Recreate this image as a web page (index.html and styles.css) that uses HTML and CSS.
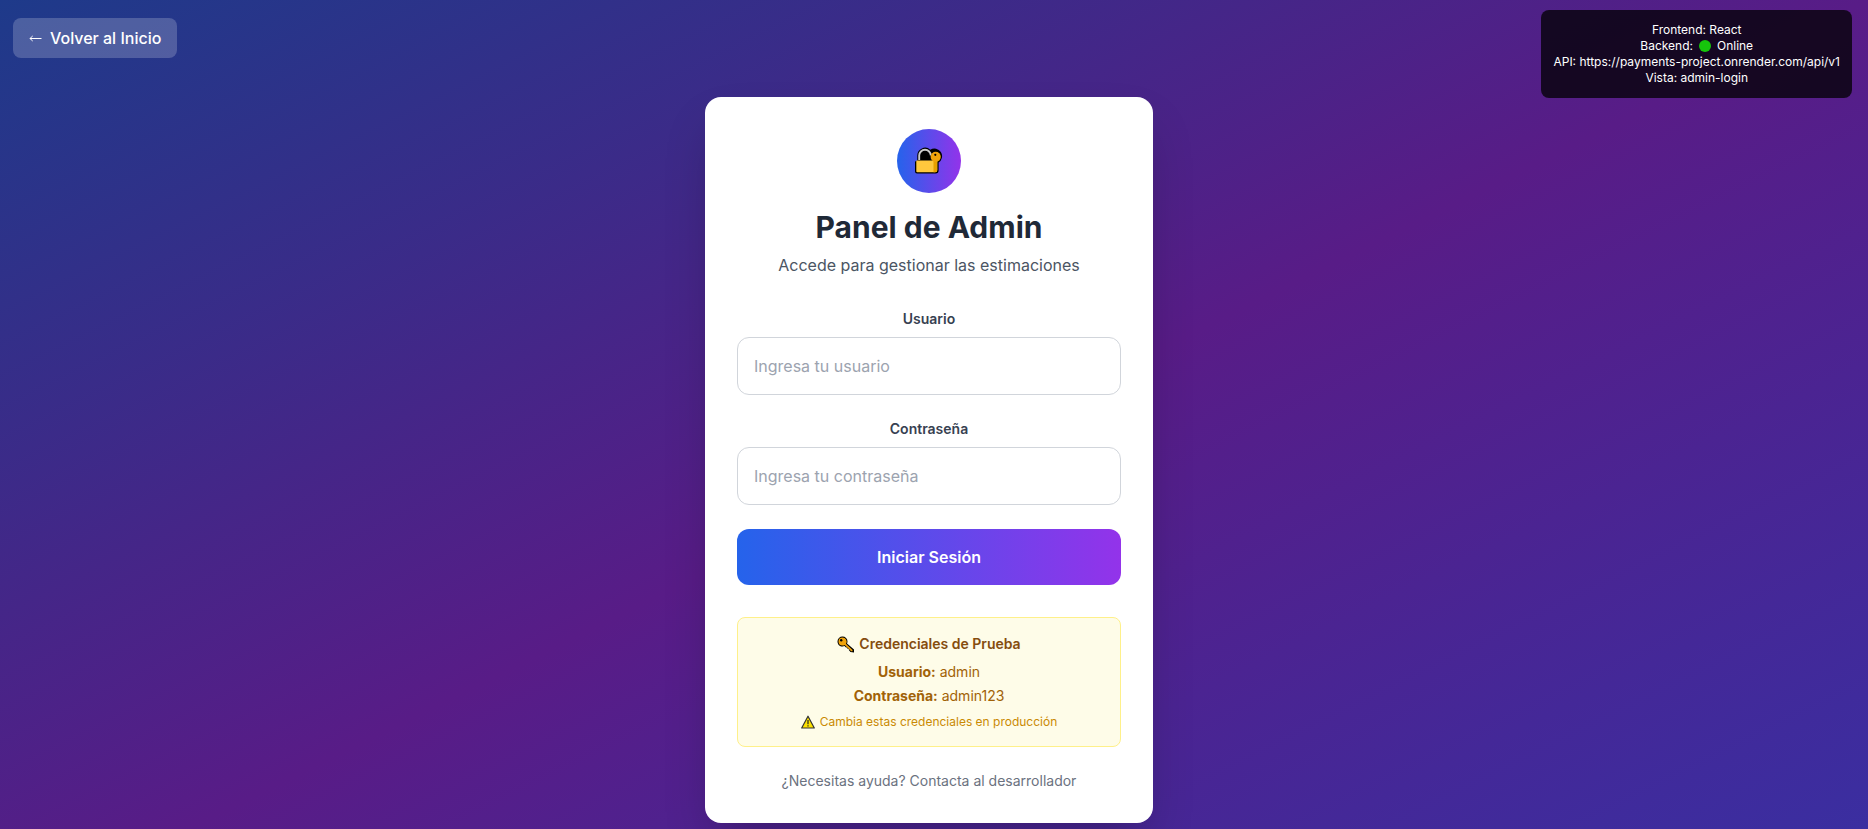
FILE: index.html
```html
<!DOCTYPE html>
<html lang="es">
<head>
  <meta charset="utf-8">
  <meta name="viewport" content="width=device-width, initial-scale=1">
  <title>Panel de Admin</title>
  <link rel="stylesheet" href="styles.css">
</head>
<body>
  <div class="page">
    <button class="back" type="button">
      <svg class="back-arrow" viewBox="0 0 13 12" aria-hidden="true"><path d="M.7 6.500h11.800M3.700 4L1 6.500 3.700 9" fill="none" stroke="currentColor"/></svg>
      Volver al Inicio
    </button>

    <main class="card">
      <div class="badge">
        <svg class="badge-icon" viewBox="0 0 28 28" aria-hidden="true">
          <path d="M2.3 14V8.500a7.800 7.800 0 0 1 13-5.800A6.200 6.200 0 1 1 23.600 15.500V23.500a3 3 0 0 1-3 3H2a2 2 0 0 1-2-2V15a1.500 1.500 0 0 1 2.300-1z" fill="#000"/>
          <path d="M4.200 13V8.600a5.800 5.800 0 0 1 11.600 0" fill="none" stroke="#ccc" stroke-width="1.900"/>
          <path d="M1.300 13.500h21v9.700a2 2 0 0 1-2 2h-18a1 1 0 0 1-1-1z" fill="#ffc83d"/>
          <path d="M18.500 13h3.700v10a2.200 2.200 0 0 1-2.200 2.200h-1.500z" fill="#e8a000"/>
          <circle cx="20.700" cy="9.800" r="5.100" fill="#f0a30a"/>
          <circle cx="20.300" cy="7.800" r="1.100" fill="#000"/>
        </svg>
      </div>
      <h1 class="title">Panel de Admin</h1>
      <p class="subtitle">Accede para gestionar las estimaciones</p>

      <form class="form">
        <div class="field">
          <label class="label" for="user">Usuario</label>
          <input class="input" id="user" type="text" placeholder="Ingresa tu usuario">
        </div>
        <div class="field">
          <label class="label" for="password">Contraseña</label>
          <input class="input" id="password" type="password" placeholder="Ingresa tu contraseña">
        </div>
        <button class="submit" type="submit">Iniciar Sesión</button>
      </form>

      <section class="notice">
        <h2 class="notice-title">
          <svg class="key-icon" viewBox="0 0 17 17" aria-hidden="true">
            <path d="M5.500.5a5 5 0 0 0-5 5c0 3 2.300 5 5 5 .8 0 1.400-.1 2-.4l1.500 1.400h1l.5 1.300 1.200.2.300 1.300 1.500 1.700 3.500.5v-3L10 7.500c.3-.6.500-1.300.500-2a5 5 0 0 0-5-5z" fill="#000"/>
            <path d="M5.500 1.500a4 4 0 0 0-4 4 4 4 0 0 0 4 4c.8 0 1.500-.2 2.200-.6l6.500 6.300h1.300v-1.300L8.900 7.700a4 4 0 0 0-3.400-6.200z" fill="#f0a30a"/>
            <circle cx="4.200" cy="4.200" r="1.200" fill="#000"/>
          </svg>
          Credenciales de Prueba
        </h2>
        <p class="notice-line"><strong>Usuario:</strong> admin</p>
        <p class="notice-line"><strong>Contraseña:</strong> admin123</p>
        <p class="notice-warning">
          <svg class="warning-icon" viewBox="0 0 14 14" aria-hidden="true">
            <path d="M7 1.200L13.300 13H.7z" fill="#fce100" stroke="#333" stroke-width="1.200" stroke-linejoin="round"/>
            <path d="M7 5v4.300M7 10.200v1.400" stroke="#222" stroke-width="1.200"/>
          </svg>
          Cambia estas credenciales en producción
        </p>
      </section>

      <p class="help">¿Necesitas ayuda? Contacta al desarrollador</p>
    </main>

    <aside class="status">
      <div>Frontend: React</div>
      <div class="status-row">Backend: <span class="dot"></span> Online</div>
      <div>API: https://payments-project.onrender.com/api/v1</div>
      <div>Vista: admin-login</div>
    </aside>
  </div>
</body>
</html>
```
FILE: styles.css
```css
* {
  box-sizing: border-box;
  margin: 0;
}

body {
  font-family: Inter, "Liberation Sans", sans-serif;
  font-size: 16px;
  line-height: 24px;
  text-align: center;
}

button,
input {
  font: inherit;
}

.page {
  display: grid;
  grid-template-columns: 1fr minmax(0, 448px) 1fr;
  align-items: start;
  min-height: 100vh;
  padding: 10px 16px 6px 6px;
  background: linear-gradient(to bottom right, #1e3a8a, #581c87, #3730a3) top left / 100% 111% no-repeat;
}

.back {
  display: flex;
  align-items: center;
  justify-self: start;
  gap: 8px;
  margin: 8px 7px;
  padding: 8px 16px;
  border: 0;
  border-radius: 8px;
  background: rgba(255, 255, 255, 0.2);
  color: #fff;
  font-weight: 500;
  white-space: nowrap;
}

.back-arrow {
  width: 13px;
  height: 12px;
}

.card {
  margin-top: 87px;
  padding: 32px;
  border-radius: 16px;
  background: #fff;
  box-shadow: 0 25px 50px -12px rgba(0, 0, 0, 0.25);
}

.badge {
  display: flex;
  align-items: center;
  justify-content: center;
  width: 64px;
  height: 64px;
  margin: 0 auto 16px;
  border-radius: 50%;
  background: linear-gradient(to right, #2563eb, #9333ea);
}

.badge-icon {
  width: 28px;
  height: 28px;
}

.title {
  margin-bottom: 8px;
  color: #1f2937;
  font-size: 30px;
  font-weight: 700;
  line-height: 36px;
}

.subtitle {
  margin-bottom: 32px;
  color: #4b5563;
}

.form {
  display: flex;
  flex-direction: column;
  gap: 24px;
}

.field {
  display: flex;
  flex-direction: column;
  gap: 8px;
}

.label {
  color: #374151;
  font-size: 14px;
  font-weight: 600;
  line-height: 20px;
}

.input {
  width: 100%;
  height: 58px;
  padding: 16px;
  border: 1px solid #d1d5db;
  border-radius: 12px;
  background: #fff;
  color: #1f2937;
}

.input::placeholder {
  color: #9ca3af;
}

.submit {
  padding: 16px;
  border: 0;
  border-radius: 12px;
  background: linear-gradient(to right, #2563eb, #9333ea);
  color: #fff;
  font-weight: 600;
}

.notice {
  margin-top: 32px;
  padding: 16px;
  border: 1px solid #fef08a;
  border-radius: 8px;
  background: #fefce8;
  color: #a16207;
  font-size: 14px;
  line-height: 20px;
}

.notice-title {
  display: flex;
  align-items: center;
  justify-content: center;
  gap: 5px;
  margin-bottom: 8px;
  color: #854d0e;
  font-size: 14px;
  font-weight: 600;
}

.key-icon {
  width: 17px;
  height: 17px;
}

.notice-line + .notice-line {
  margin-top: 4px;
}

.notice-line strong {
  font-weight: 700;
}

.notice-warning {
  display: flex;
  align-items: center;
  justify-content: center;
  gap: 5px;
  margin-top: 8px;
  color: #ca8a04;
  font-size: 12px;
  line-height: 16px;
}

.warning-icon {
  width: 14px;
  height: 14px;
}

.help {
  margin-top: 24px;
  color: #6b7280;
  font-size: 14px;
  line-height: 20px;
}

.status {
  justify-self: end;
  padding: 12px;
  border-radius: 8px;
  background: rgba(0, 0, 0, 0.75);
  color: #fff;
  font-size: 12px;
  line-height: 16px;
}

.status-row {
  display: flex;
  align-items: center;
  justify-content: center;
  gap: 6px;
}

.dot {
  width: 12px;
  height: 12px;
  border-radius: 50%;
  background: #16c60c;
}
```
